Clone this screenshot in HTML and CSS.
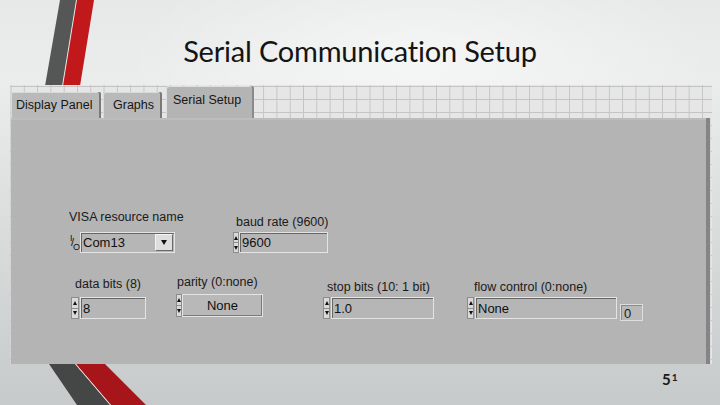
FILE: index.html
```
<!DOCTYPE html>
<html>
<head>
<meta charset="utf-8">
<link rel="stylesheet" href="styles.css">
</head>
<body>
<div class="slide">
  <svg class="stripes-top" width="100" height="90" viewBox="0 0 100 90">
    <polygon points="60,0 76,0 62,86 45,86" fill="#555656"/>
    <polygon points="77,0 94,0 80,86 63,86" fill="#c0181b"/>
  </svg>
  <svg class="stripes-bottom" width="160" height="42" viewBox="0 0 160 42">
    <polygon points="49,0 75,0 110,41 77,41" fill="#454646"/>
    <polygon points="76,0 105,0 146,41 111,41" fill="#a5151a"/>
    <line x1="75.5" y1="0" x2="110.5" y2="41" stroke="#e9d6d6" stroke-width="1"/>
  </svg>

  <h1 class="title">Serial Communication Setup</h1>

  <div class="lv">
    <div class="tabs">
      <div class="tab tab-display">Display Panel</div>
      <div class="tab tab-graphs">Graphs</div>
      <div class="tab tab-serial">Serial Setup</div>
    </div>
    <div class="panel">
      <div class="row row1">
        <div class="ctl c-visa">
          <div class="lbl">VISA resource name</div>
          <div class="field">
            <span class="io"><i class="io-i">I</i><i class="io-s">/</i><i class="io-o">O</i></span>
            <div class="box">Com13<span class="dd"></span></div>
          </div>
        </div>
        <div class="ctl c-baud">
          <div class="lbl">baud rate (9600)</div>
          <div class="field">
            <span class="arrows"><span class="up"></span><span class="dn"></span></span>
            <div class="box">9600</div>
          </div>
        </div>
      </div>
      <div class="row row2">
        <div class="ctl c-data">
          <div class="lbl">data bits (8)</div>
          <div class="field">
            <span class="arrows"><span class="up"></span><span class="dn"></span></span>
            <div class="box">8</div>
          </div>
        </div>
        <div class="ctl c-parity">
          <div class="lbl">parity (0:none)</div>
          <div class="field">
            <span class="arrows"><span class="up"></span><span class="dn"></span></span>
            <div class="box ring">None</div>
          </div>
        </div>
        <div class="ctl c-stop">
          <div class="lbl">stop bits (10: 1 bit)</div>
          <div class="field">
            <span class="arrows"><span class="up"></span><span class="dn"></span></span>
            <div class="box">1.0</div>
          </div>
        </div>
        <div class="ctl c-flow">
          <div class="lbl">flow control (0:none)</div>
          <div class="field">
            <span class="arrows"><span class="up"></span><span class="dn"></span></span>
            <div class="box">None</div>
            <div class="idx">0</div>
          </div>
        </div>
      </div>
    </div>
  </div>

  <div class="pagenum"><span class="p5">5</span><span class="p1">1</span></div>
</div>
</body>
</html>
```
FILE: styles.css
```
* { box-sizing: border-box; }
html, body { margin: 0; padding: 0; }
body { width: 720px; height: 405px; overflow: hidden; }

.slide {
  position: relative;
  width: 720px;
  height: 405px;
  overflow: hidden;
  background:
    radial-gradient(ellipse 420px 160px at 420px 60px, rgba(255,255,255,0.55), rgba(255,255,255,0) 70%),
    linear-gradient(180deg, #e7e8e8 0%, #ebecec 20%, #d9dbdb 60%, #c6caca 100%);
  font-family: "Liberation Sans", Arial, sans-serif;
}

.stripes-top { position: absolute; left: 0; top: 0; }
.stripes-bottom { position: absolute; left: 0; top: 364px; }

.title {
  margin: 0;
  height: 85px;
  padding-top: 34px;
  text-align: center;
  font-family: "Lato", "Open Sans", sans-serif;
  font-weight: 400;
  font-size: 29px;
  line-height: 34px;
  color: #141414;
  letter-spacing: -0.2px;
}

.lv {
  position: relative;
  margin-left: 10px;
  width: 702px;
  height: 279px;
  background-color: #e6e6e6;
  background-image:
    linear-gradient(90deg, #c4c4c4 1px, transparent 1px),
    linear-gradient(180deg, #c4c4c4 1px, transparent 1px);
  background-size: 13.3px 13px;
  background-position: 0.5px 1px;
}

.tabs {
  display: flex;
  align-items: flex-end;
  height: 33px;
  padding-left: 1px;
  font-size: 12.5px;
  line-height: 15px;
  color: #161616;
}
.tab {
  height: 26px;
  padding: 6px 0 0 5px;
  background: #b9b9b9;
  border-radius: 2px 2px 0 0;
  box-shadow: inset -2px 0 #7a7a7a, inset 1px 1px #d9d9d9;
  white-space: nowrap;
}
.tab-display { width: 90px; }
.tab-graphs { width: 59px; margin-left: 2px; padding-left: 10px; }
.tab-serial {
  width: 88px;
  margin-left: 4px;
  height: 32px;
  padding: 7px 0 0 7px;
  background: #b4b4b4;
  box-shadow: inset -2px 0 #8a8a8a, inset 1px 1px #dedede;
}

.panel {
  margin-left: 1px;
  width: 699px;
  height: 246px;
  background: #b4b4b4;
  border-right: 4px solid #858585;
  box-shadow: inset 0 2px #bdbdbd, 1px 0 #dcdcdc;
  font-size: 12.5px;
  line-height: 15px;
  color: #1a1a1a;
}

.row { display: flex; align-items: flex-start; }
.row1 { padding-top: 92px; padding-left: 57px; }
.row2 { margin-top: 22px; }

.ctl { flex-shrink: 0; }
.lbl { height: 22px; white-space: nowrap; }
.field { display: flex; align-items: flex-start; }

.box {
  display: flex;
  align-items: center;
  height: 21px;
  padding-left: 2px;
  background: #b6b6b6;
  border: 1px solid #e4e4e4;
  box-shadow: inset 1px 1px #666;
  font-size: 13px;
  color: #101010;
}

.arrows {
  display: flex;
  flex-direction: column;
  width: 7px;
  height: 21px;
  margin-right: 1px;
  background: #dadada;
  border: 1px solid #8c8c8c;
}
.arrows .up, .arrows .dn {
  flex: 1;
  display: flex;
  align-items: center;
  justify-content: center;
}
.arrows .up { border-bottom: 1px solid #8c8c8c; }
.arrows .up::after {
  content: "";
  border-left: 2.5px solid transparent;
  border-right: 2.5px solid transparent;
  border-bottom: 4px solid #111;
}
.arrows .dn::after {
  content: "";
  border-left: 2.5px solid transparent;
  border-right: 2.5px solid transparent;
  border-top: 4px solid #111;
}

/* VISA */
.c-visa { width: 107px; }
.c-visa .lbl { padding-left: 1px; }
.c-visa .field { height: 21px; }
.io {
  position: relative;
  display: inline-block;
  width: 12px;
  height: 21px;
  font-style: normal;
  font-size: 9px;
  line-height: 9px;
  color: #111;
}
.io i { position: absolute; font-style: normal; }
.io-i { left: 2px; top: 2px; }
.io-s { left: 3px; top: 6px; font-size: 11px; }
.io-o { left: 5px; top: 11px; }
.c-visa .box { width: 95px; padding-right: 1px; }
.dd {
  margin-left: auto;
  width: 18px;
  height: 17px;
  display: flex;
  align-items: center;
  justify-content: center;
  background: #dedede;
  border: 1px solid;
  border-color: #f4f4f4 #6a6a6a #6a6a6a #f4f4f4;
}
.dd::after {
  content: "";
  border-left: 3.5px solid transparent;
  border-right: 3.5px solid transparent;
  border-top: 5px solid #111;
}

/* baud */
.c-baud { margin-left: 58px; width: 95px; }
.c-baud .lbl { padding: 5px 0 0 3px; }
.c-baud .box { width: 89px; }
.c-baud .arrows { width: 6px; margin-right: 0; }

/* data bits */
.c-data { margin-left: 60px; width: 75px; }
.c-data .lbl { padding: 2px 0 0 4px; }
.c-data .arrows { width: 8px; height: 22px; }
.c-data .box { width: 66px; height: 22px; }

/* parity */
.c-parity { margin-left: 30px; width: 87px; }
.c-parity .lbl { height: 19px; padding-left: 1px; }
.c-parity .arrows { width: 6px; height: 23px; margin-right: 0; }
.c-parity .box.ring {
  width: 81px;
  height: 23px;
  justify-content: center;
  padding-left: 0;
  box-shadow: inset -1px -1px #7a7a7a;
  background: #b8b8b8;
}

/* stop bits */
.c-stop { margin-left: 60px; width: 111px; }
.c-stop .lbl { padding: 5px 0 0 4px; }
.c-stop .arrows { height: 22px; }
.c-stop .box { width: 103px; height: 22px; }

/* flow control */
.c-flow { margin-left: 33px; width: 176px; }
.c-flow .lbl { padding: 5px 0 0 7px; }
.c-flow .arrows { height: 22px; }
.c-flow .box { width: 142px; height: 22px; }
.idx {
  margin: 7px 0 0 3px;
  width: 23px;
  height: 17px;
  padding: 1px 0 0 3px;
  background: #b9b9b9;
  border: 1px solid #dedede;
  box-shadow: inset 1px 1px #8a8a8a;
  font-size: 13px;
  line-height: 15px;
}

.pagenum {
  position: absolute;
  left: 662px;
  top: 368px;
  font-family: "Lato", "Open Sans", sans-serif;
  font-weight: 700;
  color: #1a1a1a;
  line-height: 16px;
  white-space: nowrap;
}
.p5 { font-size: 15px; position: relative; top: 3px; }
.p1 { font-size: 10px; margin-left: 1px; position: relative; top: -1px; }
```
